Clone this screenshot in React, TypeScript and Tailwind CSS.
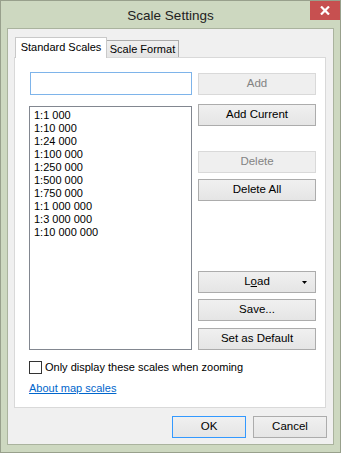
const scales = [
  '1:1 000',
  '1:10 000',
  '1:24 000',
  '1:100 000',
  '1:250 000',
  '1:500 000',
  '1:750 000',
  '1:1 000 000',
  '1:3 000 000',
  '1:10 000 000',
];

const font = 'font-["Segoe_UI","Liberation_Sans",Arial,sans-serif]';

function Btn({
  children,
  disabled,
  className = '',
}: {
  children: React.ReactNode;
  disabled?: boolean;
  className?: string;
}) {
  return (
    <div
      className={
        'relative flex h-[22px] w-[118px] items-center justify-center border text-[11.5px] ' +
        (disabled
          ? 'border-[#d9d9d9] bg-[#efefef] text-[#838383] '
          : 'border-[#acacac] bg-gradient-to-b from-[#f0f0f0] to-[#e5e5e5] text-black ') +
        className
      }
    >
      {children}
    </div>
  );
}

export default function App() {
  return (
    <div
      className={`${font} flex h-[453px] w-[341px] flex-col border border-[#98a08c] bg-[#cdd8c0] px-[6px] pb-[7px] leading-none`}
    >
      {/* Title bar */}
      <div className="grid h-[27px] grid-cols-[1fr_auto_1fr] items-start">
        <div />
        <div className="pt-[8px] text-[13.5px] text-[#222]">Scale Settings</div>
        <div className="flex justify-end">
          <div className="-mr-[6px] flex h-[19px] w-[30px] items-center justify-center bg-[#c75050]">
            <svg width="10" height="9" viewBox="0 0 10 9">
              <path d="M1 0.5 L9 8.5 M9 0.5 L1 8.5" stroke="#fff" strokeWidth="2.2" />
            </svg>
          </div>
        </div>
      </div>

      {/* Client area */}
      <div className="flex flex-1 flex-col border border-[#aab39e] bg-[#f0f0f0] pl-[6px] pr-[7px] pt-[8px]">
        {/* Tabs */}
        <div className="flex items-end">
          <div className="z-10 -mb-px ml-px flex h-[21px] w-[92px] items-center justify-center border border-b-0 border-[#c9c9c9] bg-white pb-[2px] text-[11px]">
            Standard Scales
          </div>
          <div className="flex h-[17px] w-[72px] items-center justify-center whitespace-nowrap border border-b-0 border-l-0 border-[#acacac] bg-gradient-to-b from-[#f0f0f0] to-[#e5e5e5] text-[11px]">
            Scale Format
          </div>
        </div>

        {/* Tab panel */}
        <div className="flex h-[351px] w-[312px] flex-col border border-[#d9d9d9] bg-white pl-[14px] pt-[14px]">
          <div className="flex">
            <div className="ml-px h-[23px] w-[162px] border border-[#7eb4ea] bg-white" />
            <Btn disabled className="ml-[6px] mt-px">
              Add
            </Btn>
          </div>

          <div className="mt-[9px] flex">
            <div className="mt-[2px] h-[244px] w-[163px] border border-[#828790] bg-white px-[4px] pt-[2px]">
              {scales.map((s) => (
                <div key={s} className="h-[13px] whitespace-pre text-[11px] leading-[13px] text-[#000]">
                  {s}
                </div>
              ))}
            </div>
            <div className="ml-[6px] flex flex-col">
              <Btn>Add Current</Btn>
              <Btn disabled className="mt-[25px]">
                Delete
              </Btn>
              <Btn className="mt-[6px]">Delete All</Btn>
              <Btn className="mt-[70px]">
                <span>
                  L<span className="underline">o</span>ad
                </span>
                <svg className="absolute right-[8px] top-[9px]" width="5" height="3" viewBox="0 0 5 3">
                  <path d="M0 0 H5 L2.5 3 Z" fill="#000" />
                </svg>
              </Btn>
              <Btn className="mt-[6px]">Save...</Btn>
              <Btn className="mt-[7px]">Set as Default</Btn>
            </div>
          </div>

          <div className="mt-[11px] flex items-center">
            <div className="h-[13px] w-[13px] border border-[#333] bg-white" />
            <span className="ml-[3px] text-[11px] text-black">Only display these scales when zooming</span>
          </div>
          <div className="mt-[9px] text-[11px] text-[#0066cc] underline">About map scales</div>
        </div>

        {/* Dialog buttons */}
        <div className="mt-[8px] flex justify-end gap-[7px]">
          <div className="flex h-[22px] w-[74px] items-center justify-center border border-[#3399ff] bg-gradient-to-b from-[#f0f0f0] to-[#e5e5e5] text-[11.5px]">
            OK
          </div>
          <div className="-mr-px flex h-[22px] w-[74px] items-center justify-center border border-[#acacac] bg-gradient-to-b from-[#f0f0f0] to-[#e5e5e5] text-[11.5px]">
            Cancel
          </div>
        </div>
      </div>
    </div>
  );
}
